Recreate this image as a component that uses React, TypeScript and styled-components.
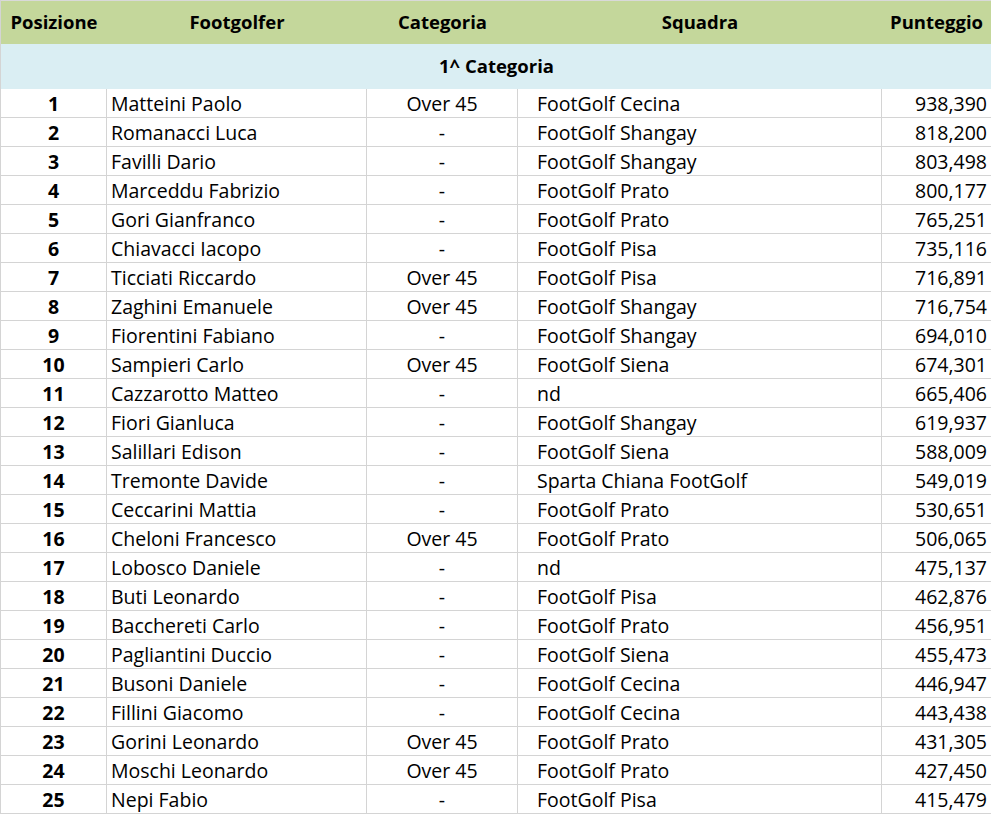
import React from "react";
import styled, { createGlobalStyle } from "styled-components";

const Global = createGlobalStyle`
  html, body { margin: 0; padding: 0; background: #ffffff; }
  body { font-family: "Open Sans", "Liberation Sans", sans-serif; color: #000; }
`;

const rows: [string, string, string, string][] = [
  ["Matteini Paolo", "Over 45", "FootGolf Cecina", "938,390"],
  ["Romanacci Luca", "-", "FootGolf Shangay", "818,200"],
  ["Favilli Dario", "-", "FootGolf Shangay", "803,498"],
  ["Marceddu Fabrizio", "-", "FootGolf Prato", "800,177"],
  ["Gori Gianfranco", "-", "FootGolf Prato", "765,251"],
  ["Chiavacci Iacopo", "-", "FootGolf Pisa", "735,116"],
  ["Ticciati Riccardo", "Over 45", "FootGolf Pisa", "716,891"],
  ["Zaghini Emanuele", "Over 45", "FootGolf Shangay", "716,754"],
  ["Fiorentini Fabiano", "-", "FootGolf Shangay", "694,010"],
  ["Sampieri Carlo", "Over 45", "FootGolf Siena", "674,301"],
  ["Cazzarotto Matteo", "-", "nd", "665,406"],
  ["Fiori Gianluca", "-", "FootGolf Shangay", "619,937"],
  ["Salillari Edison", "-", "FootGolf Siena", "588,009"],
  ["Tremonte Davide", "-", "Sparta Chiana FootGolf", "549,019"],
  ["Ceccarini Mattia", "-", "FootGolf Prato", "530,651"],
  ["Cheloni Francesco", "Over 45", "FootGolf Prato", "506,065"],
  ["Lobosco Daniele", "-", "nd", "475,137"],
  ["Buti Leonardo", "-", "FootGolf Pisa", "462,876"],
  ["Bacchereti Carlo", "-", "FootGolf Prato", "456,951"],
  ["Pagliantini Duccio", "-", "FootGolf Siena", "455,473"],
  ["Busoni Daniele", "-", "FootGolf Cecina", "446,947"],
  ["Fillini Giacomo", "-", "FootGolf Cecina", "443,438"],
  ["Gorini Leonardo", "Over 45", "FootGolf Prato", "431,305"],
  ["Moschi Leonardo", "Over 45", "FootGolf Prato", "427,450"],
  ["Nepi Fabio", "-", "FootGolf Pisa", "415,479"],
];

const Sheet = styled.div`
  display: grid;
  grid-template-columns: 106px 260px 151px 364px 110px;
  width: 991px;
  border-left: 1px solid #d4d4d4;
  box-sizing: border-box;
  font-size: 19.5px;
  line-height: 1;
`;

const HeadCell = styled.div<{ $align?: "center" | "right" }>`
  height: 44px;
  box-sizing: border-box;
  background: #c4d79b;
  border-top: 1px solid #d9d9d9;
  display: flex;
  align-items: center;
  justify-content: ${(p) => (p.$align === "right" ? "flex-end" : "center")};
  padding: 0 ${(p) => (p.$align === "right" ? 9 : 0)}px 0 0;
  font-size: 18.5px;
  font-weight: 700;
`;

const Band = styled.div`
  grid-column: 1 / -1;
  height: 45px;
  background: #daeef3;
  display: flex;
  align-items: center;
  justify-content: center;
  font-size: 18.5px;
  font-weight: 700;
  box-sizing: border-box;
`;

const Cell = styled.div<{ $align: "left" | "center" | "right"; $bold?: boolean; $indent?: number; $last?: boolean }>`
  height: 29px;
  box-sizing: border-box;
  border-bottom: 1px solid #d4d4d4;
  border-right: ${(p) => (p.$last ? "none" : "1px solid #d4d4d4")};
  display: flex;
  align-items: center;
  justify-content: ${(p) =>
    p.$align === "left" ? "flex-start" : p.$align === "right" ? "flex-end" : "center"};
  padding: 1px ${(p) => (p.$align === "right" ? 5 : 0)}px 0 ${(p) => p.$indent ?? 0}px;
  font-size: 19.5px;
  font-weight: ${(p) => (p.$bold ? 700 : 400)};
  white-space: nowrap;
`;

export default function App() {
  return (
    <>
      <Global />
      <Sheet>
        <HeadCell>Posizione</HeadCell>
        <HeadCell>Footgolfer</HeadCell>
        <HeadCell>Categoria</HeadCell>
        <HeadCell>Squadra</HeadCell>
        <HeadCell $align="right">Punteggio</HeadCell>
        <Band>1^ Categoria</Band>
        {rows.map((r, i) => (
          <React.Fragment key={i}>
            <Cell $align="center" $bold>{i + 1}</Cell>
            <Cell $align="left" $indent={4}>{r[0]}</Cell>
            <Cell $align="center">{r[1]}</Cell>
            <Cell $align="left" $indent={19}>{r[2]}</Cell>
            <Cell $align="right" $last>{r[3]}</Cell>
          </React.Fragment>
        ))}
      </Sheet>
    </>
  );
}
